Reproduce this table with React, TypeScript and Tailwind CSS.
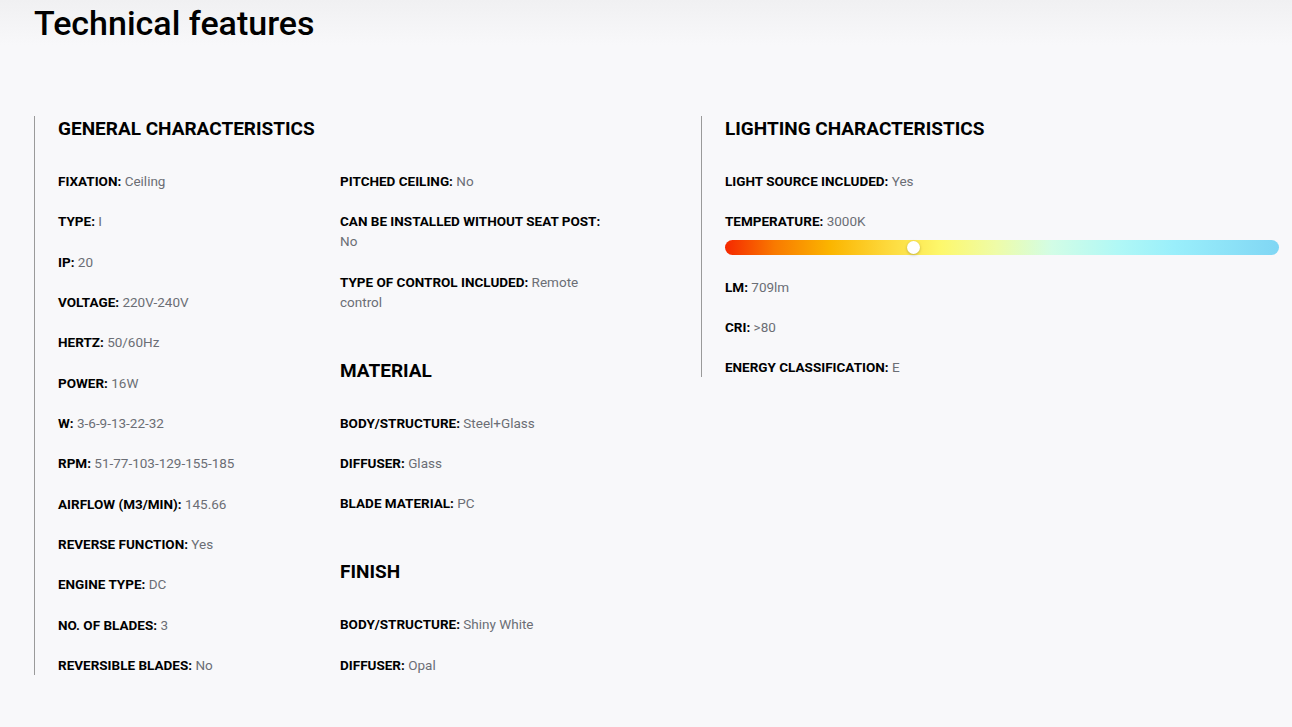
import type { FC } from 'react';

type Spec = { label: string; value: string };

const general: Spec[] = [
  { label: 'FIXATION', value: 'Ceiling' },
  { label: 'TYPE', value: 'I' },
  { label: 'IP', value: '20' },
  { label: 'VOLTAGE', value: '220V-240V' },
  { label: 'HERTZ', value: '50/60Hz' },
  { label: 'POWER', value: '16W' },
  { label: 'W', value: '3-6-9-13-22-32' },
  { label: 'RPM', value: '51-77-103-129-155-185' },
  { label: 'AIRFLOW (M3/MIN)', value: '145.66' },
  { label: 'REVERSE FUNCTION', value: 'Yes' },
  { label: 'ENGINE TYPE', value: 'DC' },
  { label: 'NO. OF BLADES', value: '3' },
  { label: 'REVERSIBLE BLADES', value: 'No' },
];

const generalExtra: Spec[] = [
  { label: 'PITCHED CEILING', value: 'No' },
  { label: 'CAN BE INSTALLED WITHOUT SEAT POST', value: 'No' },
  { label: 'TYPE OF CONTROL INCLUDED', value: 'Remote control' },
];

const material: Spec[] = [
  { label: 'BODY/STRUCTURE', value: 'Steel+Glass' },
  { label: 'DIFFUSER', value: 'Glass' },
  { label: 'BLADE MATERIAL', value: 'PC' },
];

const finish: Spec[] = [
  { label: 'BODY/STRUCTURE', value: 'Shiny White' },
  { label: 'DIFFUSER', value: 'Opal' },
];

const Row: FC<Spec> = ({ label, value }) => (
  <p className="text-[13.5px] leading-5 text-[#6b6e75]">
    <span className="font-bold text-black">{label}:</span> {value}
  </p>
);

const SectionTitle: FC<{ title: string; className?: string }> = ({ title, className }) => (
  <h3 className={`text-[19px] leading-[26px] font-bold text-black mb-[29px] ${className ?? ''}`}>{title}</h3>
);

const List: FC<{ items: Spec[] }> = ({ items }) => (
  <div className="flex flex-col gap-[20.33px]">
    {items.map(item => (
      <Row key={item.label} {...item} />
    ))}
  </div>
);

const TemperatureBar: FC = () => (
  <div className="relative h-[15px] w-[554px] mt-[9px] mb-[1px] rounded-full bg-[linear-gradient(90deg,#f52800_0%,#f97a00_9%,#fbb500_19%,#fdd83a_29%,#fdf86c_39%,#eefca8_49%,#d2fde6_59%,#b0f8f6_71%,#9aeffb_81%,#80d6f4_100%)]">
    <div className="absolute left-[182px] top-[1px] h-[13px] w-[13px] rounded-full bg-white shadow-[0_1px_3px_rgba(0,0,0,0.25)]" />
  </div>
);

export default function App() {
  return (
    <div
      className="min-h-[727px] w-full bg-[linear-gradient(180deg,#f0f0f2_0px,#f8f8fa_45px,#f8f8fa_100%)] pl-[34px] pt-[1px] text-black"
      style={{ fontFamily: 'Roboto, "Open Sans", Arial, sans-serif' }}
    >
      <h2 className="text-[34px] leading-[44px] font-medium">Technical features</h2>

      <div className="mt-[71px] flex items-start">
        <section className="w-[667px] shrink-0 border-l border-[#9a9a9a] pl-[23px]">
          <SectionTitle title="GENERAL CHARACTERISTICS" />
          <div className="flex">
            <div className="w-[282px]">
              <List items={general} />
            </div>
            <div className="w-[270px]">
              <List items={generalExtra} />
              <SectionTitle title="MATERIAL" className="mt-[46px]" />
              <List items={material} />
              <SectionTitle title="FINISH" className="mt-[46px]" />
              <List items={finish} />
            </div>
          </div>
        </section>

        <section className="shrink-0 border-l border-[#9a9a9a] pl-[23px]">
          <SectionTitle title="LIGHTING CHARACTERISTICS" />
          <div className="flex flex-col gap-[20.33px]">
            <Row label="LIGHT SOURCE INCLUDED" value="Yes" />
            <div>
              <Row label="TEMPERATURE" value="3000K" />
              <TemperatureBar />
            </div>
            <Row label="LM" value="709lm" />
            <Row label="CRI" value=">80" />
            <Row label="ENERGY CLASSIFICATION" value="E" />
          </div>
        </section>
      </div>
    </div>
  );
}
